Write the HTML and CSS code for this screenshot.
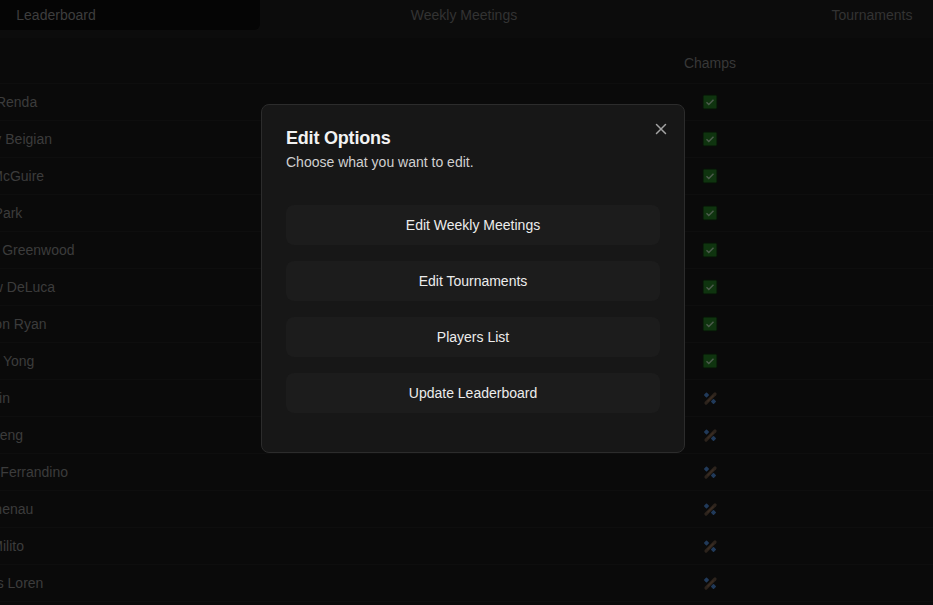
FILE: index.html
```html
<!DOCTYPE html>
<html lang="en">
<head>
<meta charset="utf-8">
<title>Leaderboard</title>
<link rel="stylesheet" href="styles.css">
</head>
<body>
<div class="page">
  <nav class="tabs">
    <div class="tab active">Leaderboard</div>
    <div class="tab">Weekly Meetings</div>
    <div class="tab">Tournaments</div>
  </nav>
  <div class="board">
    <div class="row head"><div class="name"></div><div class="champs">Champs</div></div>
    <div class="row"><div class="name">Robert Renda</div><div class="champs"><svg class="ico" viewBox="0 0 16 16"><rect x="1" y="1" width="14" height="14" rx="1" fill="#0f340f" stroke="#061006"/><path d="M4.5 8.3l2.3 2.3 4.7-4.8" fill="none" stroke="#4e5c4e" stroke-width="1.4"/></svg></div></div>
    <div class="row"><div class="name">Anthony Beigian</div><div class="champs"><svg class="ico" viewBox="0 0 16 16"><rect x="1" y="1" width="14" height="14" rx="1" fill="#0f340f" stroke="#061006"/><path d="M4.5 8.3l2.3 2.3 4.7-4.8" fill="none" stroke="#4e5c4e" stroke-width="1.4"/></svg></div></div>
    <div class="row"><div class="name">Jacob McGuire</div><div class="champs"><svg class="ico" viewBox="0 0 16 16"><rect x="1" y="1" width="14" height="14" rx="1" fill="#0f340f" stroke="#061006"/><path d="M4.5 8.3l2.3 2.3 4.7-4.8" fill="none" stroke="#4e5c4e" stroke-width="1.4"/></svg></div></div>
    <div class="row"><div class="name">Daniel Park</div><div class="champs"><svg class="ico" viewBox="0 0 16 16"><rect x="1" y="1" width="14" height="14" rx="1" fill="#0f340f" stroke="#061006"/><path d="M4.5 8.3l2.3 2.3 4.7-4.8" fill="none" stroke="#4e5c4e" stroke-width="1.4"/></svg></div></div>
    <div class="row"><div class="name">Michael Greenwood</div><div class="champs"><svg class="ico" viewBox="0 0 16 16"><rect x="1" y="1" width="14" height="14" rx="1" fill="#0f340f" stroke="#061006"/><path d="M4.5 8.3l2.3 2.3 4.7-4.8" fill="none" stroke="#4e5c4e" stroke-width="1.4"/></svg></div></div>
    <div class="row"><div class="name">Matthew DeLuca</div><div class="champs"><svg class="ico" viewBox="0 0 16 16"><rect x="1" y="1" width="14" height="14" rx="1" fill="#0f340f" stroke="#061006"/><path d="M4.5 8.3l2.3 2.3 4.7-4.8" fill="none" stroke="#4e5c4e" stroke-width="1.4"/></svg></div></div>
    <div class="row"><div class="name">Anderson Ryan</div><div class="champs"><svg class="ico" viewBox="0 0 16 16"><rect x="1" y="1" width="14" height="14" rx="1" fill="#0f340f" stroke="#061006"/><path d="M4.5 8.3l2.3 2.3 4.7-4.8" fill="none" stroke="#4e5c4e" stroke-width="1.4"/></svg></div></div>
    <div class="row"><div class="name">Timothy Yong</div><div class="champs"><svg class="ico" viewBox="0 0 16 16"><rect x="1" y="1" width="14" height="14" rx="1" fill="#0f340f" stroke="#061006"/><path d="M4.5 8.3l2.3 2.3 4.7-4.8" fill="none" stroke="#4e5c4e" stroke-width="1.4"/></svg></div></div>
    <div class="row"><div class="name">Jason Lin</div><div class="champs"><svg class="ico" viewBox="0 0 16 16"><path d="M4 13L13 4" stroke="#2c231c" stroke-width="3.2" stroke-linecap="round"/><path d="M5.5 11.5L11.5 5.5" stroke="#3a2d22" stroke-width="1.4"/><rect x="2.5" y="3" width="4" height="4" rx="0.8" fill="#213a5a" transform="rotate(45 4.5 5)"/><rect x="9.5" y="9.5" width="4" height="4" rx="0.8" fill="#213a5a" transform="rotate(45 11.5 11.5)"/></svg></div></div>
    <div class="row"><div class="name">Henry Feng</div><div class="champs"><svg class="ico" viewBox="0 0 16 16"><path d="M4 13L13 4" stroke="#2c231c" stroke-width="3.2" stroke-linecap="round"/><path d="M5.5 11.5L11.5 5.5" stroke="#3a2d22" stroke-width="1.4"/><rect x="2.5" y="3" width="4" height="4" rx="0.8" fill="#213a5a" transform="rotate(45 4.5 5)"/><rect x="9.5" y="9.5" width="4" height="4" rx="0.8" fill="#213a5a" transform="rotate(45 11.5 11.5)"/></svg></div></div>
    <div class="row"><div class="name">Vincent Ferrandino</div><div class="champs"><svg class="ico" viewBox="0 0 16 16"><path d="M4 13L13 4" stroke="#2c231c" stroke-width="3.2" stroke-linecap="round"/><path d="M5.5 11.5L11.5 5.5" stroke="#3a2d22" stroke-width="1.4"/><rect x="2.5" y="3" width="4" height="4" rx="0.8" fill="#213a5a" transform="rotate(45 4.5 5)"/><rect x="9.5" y="9.5" width="4" height="4" rx="0.8" fill="#213a5a" transform="rotate(45 11.5 11.5)"/></svg></div></div>
    <div class="row"><div class="name">Luke Chenau</div><div class="champs"><svg class="ico" viewBox="0 0 16 16"><path d="M4 13L13 4" stroke="#2c231c" stroke-width="3.2" stroke-linecap="round"/><path d="M5.5 11.5L11.5 5.5" stroke="#3a2d22" stroke-width="1.4"/><rect x="2.5" y="3" width="4" height="4" rx="0.8" fill="#213a5a" transform="rotate(45 4.5 5)"/><rect x="9.5" y="9.5" width="4" height="4" rx="0.8" fill="#213a5a" transform="rotate(45 11.5 11.5)"/></svg></div></div>
    <div class="row"><div class="name">Jacob Milito</div><div class="champs"><svg class="ico" viewBox="0 0 16 16"><path d="M4 13L13 4" stroke="#2c231c" stroke-width="3.2" stroke-linecap="round"/><path d="M5.5 11.5L11.5 5.5" stroke="#3a2d22" stroke-width="1.4"/><rect x="2.5" y="3" width="4" height="4" rx="0.8" fill="#213a5a" transform="rotate(45 4.5 5)"/><rect x="9.5" y="9.5" width="4" height="4" rx="0.8" fill="#213a5a" transform="rotate(45 11.5 11.5)"/></svg></div></div>
    <div class="row"><div class="name">Nicholas Loren</div><div class="champs"><svg class="ico" viewBox="0 0 16 16"><path d="M4 13L13 4" stroke="#2c231c" stroke-width="3.2" stroke-linecap="round"/><path d="M5.5 11.5L11.5 5.5" stroke="#3a2d22" stroke-width="1.4"/><rect x="2.5" y="3" width="4" height="4" rx="0.8" fill="#213a5a" transform="rotate(45 4.5 5)"/><rect x="9.5" y="9.5" width="4" height="4" rx="0.8" fill="#213a5a" transform="rotate(45 11.5 11.5)"/></svg></div></div>
  </div>
</div>
<div class="overlay">
  <div class="modal">
    <button class="close" aria-label="Close"><svg viewBox="0 0 16 16"><path d="M3.5 3.5l9 9M12.5 3.5l-9 9" stroke="#a3a3a3" stroke-width="1.5" stroke-linecap="round"/></svg></button>
    <h2 class="title">Edit Options</h2>
    <p class="sub">Choose what you want to edit.</p>
    <div class="actions">
      <button class="act">Edit Weekly Meetings</button>
      <button class="act">Edit Tournaments</button>
      <button class="act">Players List</button>
      <button class="act">Update Leaderboard</button>
    </div>
  </div>
</div>
</body>
</html>
```
FILE: styles.css
```css
* { box-sizing: border-box; }
html, body {
  margin: 0;
  height: 100%;
  background: #0a0a0a;
  overflow: hidden;
  font-family: "Liberation Sans", Arial, sans-serif;
  font-size: 14px;
}
.page { width: 933px; }
.tabs {
  display: grid;
  grid-template-columns: 408px 408px 408px;
  width: 1224px;
  margin-left: -148px;
  height: 38px;
  background: #0c0c0c;
  align-items: start;
}
.tab {
  height: 30px;
  line-height: 30px;
  text-align: center;
  color: #333333;
  border-radius: 0 0 6px 6px;
}
.tab.active {
  background: #050505;
  color: #3e3e3e;
}
.board {
  margin-top: 5px;
  margin-left: -60px;
  width: 1000px;
}
.row {
  display: grid;
  grid-template-columns: 730px 80px;
  height: 37px;
  border-bottom: 1px solid #0e0e0e;
  align-items: center;
  color: #3c3c3c;
}
.row.head {
  height: 41px;
  color: #383838;
}
.name {
  padding-left: 10px;
  white-space: nowrap;
}
.champs {
  text-align: center;
  display: flex;
  justify-content: center;
}
.ico { width: 16px; height: 16px; display: block; }
.overlay {
  position: fixed;
  inset: 0;
}
.modal {
  position: absolute;
  left: 261px;
  top: 104px;
  width: 424px;
  height: 349px;
  background: #171717;
  border: 1px solid #2c2c2c;
  border-radius: 8px;
  padding: 24px;
}
.close {
  position: absolute;
  top: 16px;
  right: 15px;
  width: 16px;
  height: 16px;
  padding: 0;
  border: 0;
  background: none;
}
.close svg { width: 16px; height: 16px; display: block; }
.title {
  margin: 0;
  font-size: 18px;
  line-height: 18px;
  font-weight: 700;
  color: #f2f2f2;
  letter-spacing: -0.2px;
}
.sub {
  margin: 5px 0 0;
  font-size: 14px;
  line-height: 20px;
  color: #d0d0d0;
}
.actions {
  margin-top: 33px;
  display: flex;
  flex-direction: column;
  gap: 16px;
}
.act {
  height: 40px;
  border: 0;
  border-radius: 8px;
  background: #1c1c1c;
  color: #ececec;
  font-family: "Liberation Sans", Arial, sans-serif;
  font-size: 14px;
}
```
